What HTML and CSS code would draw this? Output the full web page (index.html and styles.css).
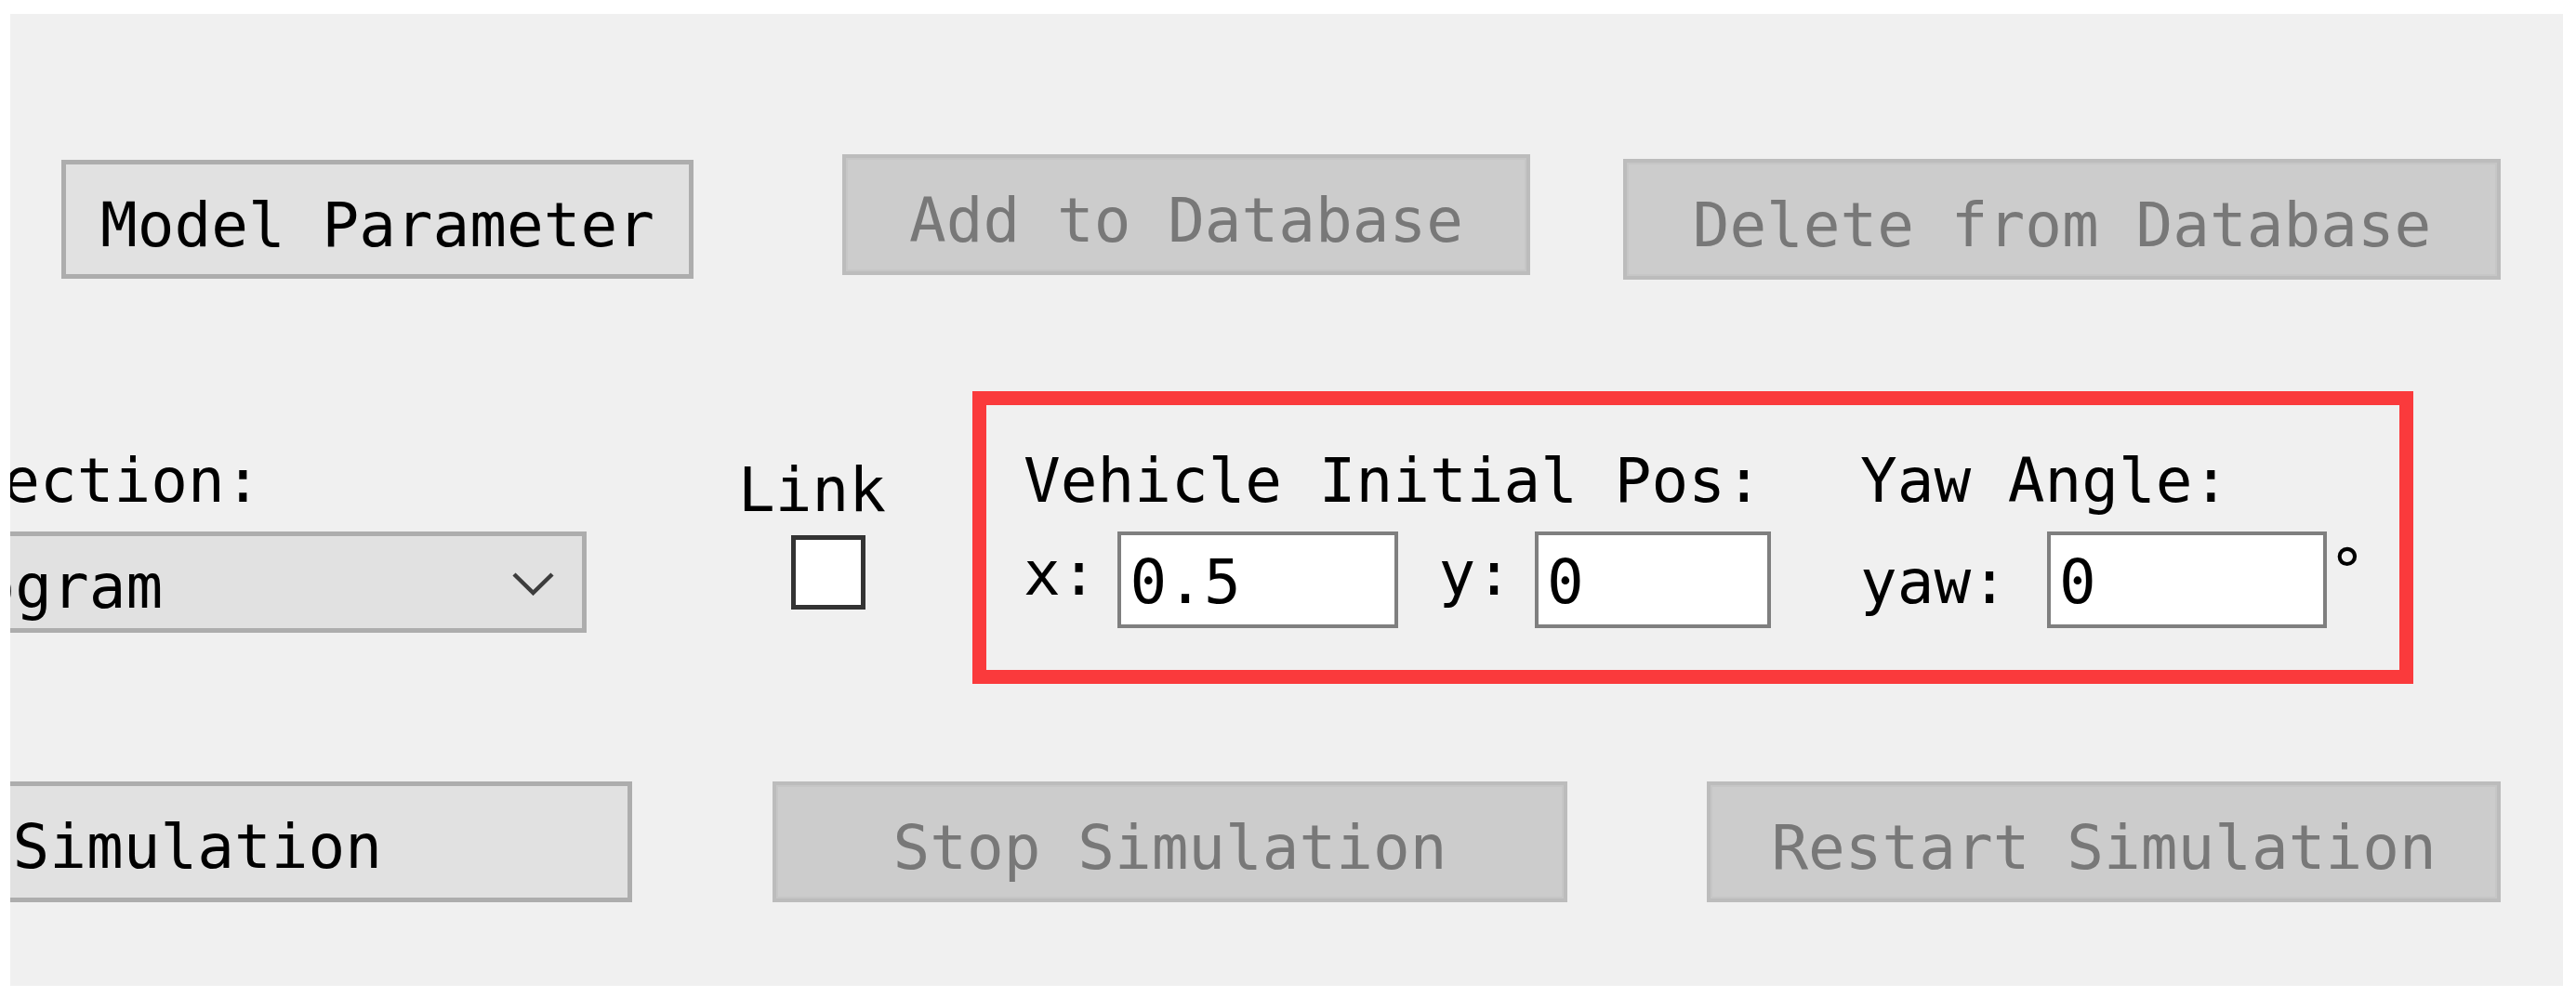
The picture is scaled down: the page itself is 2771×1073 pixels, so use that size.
FILE: index.html
```html
<!DOCTYPE html>
<html>
<head>
<meta charset="utf-8">
<title>Simulation Panel</title>
<link rel="stylesheet" href="styles.css">
</head>
<body>
<div class="panel">
  <div class="row row-top">
    <div class="btn btn-model" role="button">Model Parameter</div>
    <div class="btn btn-disabled btn-add" role="button" aria-disabled="true">Add to Database</div>
    <div class="btn btn-disabled btn-delete" role="button" aria-disabled="true">Delete from Database</div>
  </div>
  <div class="row row-mid">
    <div class="sel-col">
      <div class="label sel-label">Selection:</div>
      <div class="dropdown">
        <span class="dd-text">Program</span>
        <svg class="chev" width="45" height="25" viewBox="0 0 45 25"><polyline points="2,2 22.5,22 43,2" fill="none" stroke="#3c3c3c" stroke-width="4.5"/></svg>
      </div>
    </div>
    <div class="link-col">
      <div class="label">Link</div>
      <div class="checkbox"></div>
    </div>
    <div class="redbox">
      <div class="group">
        <div class="label">Vehicle Initial Pos:</div>
        <div class="field-row">
          <span class="label field-label">x:</span>
          <div class="input input-x">0.5</div>
          <span class="label field-label y-label">y:</span>
          <div class="input input-y">0</div>
        </div>
      </div>
      <div class="group yaw-group">
        <div class="label">Yaw Angle:</div>
        <div class="field-row">
          <span class="label yaw-label">yaw:</span>
          <div class="input input-yaw">0</div>
          <span class="deg">°</span>
        </div>
      </div>
    </div>
  </div>
  <div class="row row-bottom">
    <div class="btn btn-start" role="button">Start Simulation</div>
    <div class="btn btn-disabled btn-stop" role="button" aria-disabled="true">Stop Simulation</div>
    <div class="btn btn-disabled btn-restart" role="button" aria-disabled="true">Restart Simulation</div>
  </div>
</div>
</body>
</html>
```

FILE: styles.css
```css
* { box-sizing: border-box; }

body {
  margin: 0;
  background: #ffffff;
  font-family: "DejaVu Sans Mono", "Liberation Mono", monospace;
  font-size: 66px;
  line-height: 66px;
  color: #000000;
}

.panel {
  margin: 15px 0 0 11px;
  width: 2746px;
  height: 1046px;
  background: #f0f0f0;
  overflow: hidden;
  padding-top: 151px;
}

.row {
  display: flex;
  align-items: flex-start;
}

.label {
  display: block;
  white-space: nowrap;
}

/* buttons */
.btn {
  display: block;
  flex: none;
  height: 130px;
  text-align: center;
  white-space: nowrap;
  background: #e1e1e1;
  border: 5px solid #adadad;
  padding-top: 33px;
  color: #000000;
}

.btn-disabled {
  background: #cccccc;
  border: 4px solid #bcbcbc;
  box-shadow: inset 0 0 0 2px #c6c6c6;
  color: #787878;
  padding-top: 35px;
}

.btn-model { margin-left: 55px; margin-top: 6px; width: 680px; height: 128px; }
.btn-add { margin-left: 160px; width: 740px; }
.btn-delete { margin-left: 100px; margin-top: 5px; width: 944px; }

/* middle row */
.row-mid { margin-top: 120px; }

.sel-col {
  flex: none;
  margin-left: -141px;
  width: 761px;
}

.sel-label {
  padding-left: 14px;
  padding-top: 64px;
}

.dropdown {
  margin-top: 21px;
  height: 109px;
  border: 5px solid #adadad;
  background: #e1e1e1;
  display: flex;
  justify-content: space-between;
  align-items: flex-start;
  padding: 22px 30px 0 22px;
}

.dd-text { white-space: nowrap; }

.chev {
  display: block;
  margin-top: 17px;
  flex: none;
}

.link-col {
  flex: none;
  margin-left: 163px;
  padding-top: 74px;
}

.checkbox {
  margin-top: 15px;
  margin-left: 57px;
  width: 80px;
  height: 80px;
  border: 5px solid #333333;
  background: #ffffff;
}

.redbox {
  flex: none;
  margin-left: 93px;
  width: 1550px;
  height: 315px;
  border: 15px solid #fa3a3c;
  display: flex;
  align-items: flex-start;
  padding: 49px 0 0 40px;
}

.group { flex: none; }
.yaw-group { margin-left: 96px; }

.field-row {
  display: flex;
  align-items: flex-start;
  margin-top: 21px;
}

.field-label { margin-top: 13px; }
.y-label { margin-left: 43px; }
.yaw-label { margin-top: 22px; }

.input {
  flex: none;
  height: 104px;
  background: #ffffff;
  border: 4px solid #7f7f7f;
  padding: 18px 0 0 9px;
  white-space: nowrap;
}

.input-x { margin-left: 22px; width: 302px; }
.input-y { margin-left: 24px; width: 254px; }
.input-yaw { margin-left: 42px; width: 301px; }

.deg {
  display: block;
  margin-left: 2px;
  margin-top: 11px;
}

/* bottom row */
.row-bottom { margin-top: 105px; }

.btn-start { margin-left: -505px; width: 1174px; }
.btn-stop { margin-left: 151px; width: 855px; }
.btn-restart { margin-left: 150px; width: 854px; }
```
